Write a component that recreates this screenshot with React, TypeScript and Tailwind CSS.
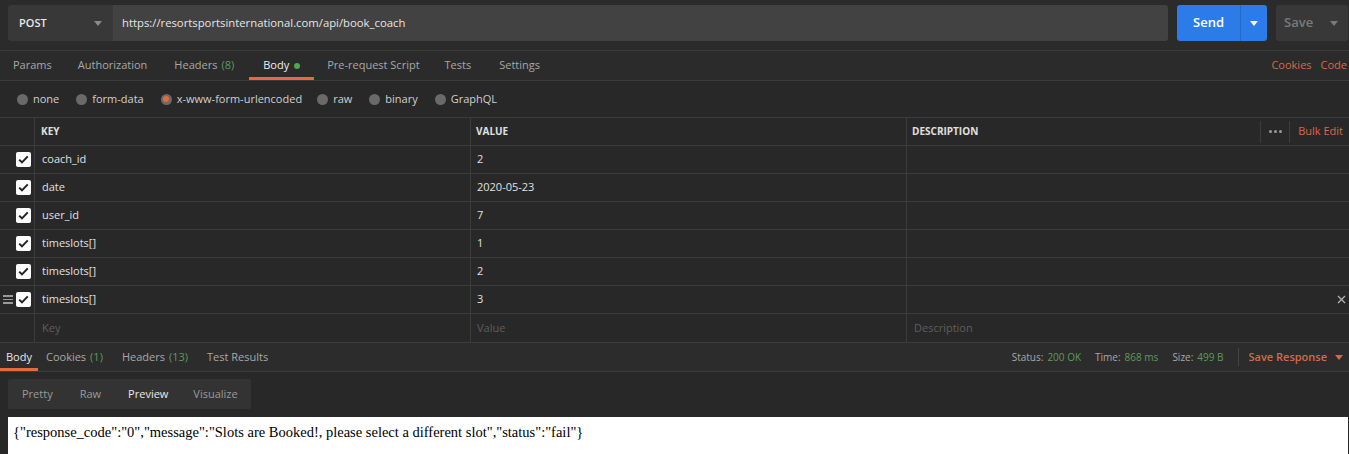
import React from 'react';

const rows = [
  { key: 'coach_id', value: '2' },
  { key: 'date', value: '2020-05-23' },
  { key: 'user_id', value: '7' },
  { key: 'timeslots[]', value: '1' },
  { key: 'timeslots[]', value: '2' },
  { key: 'timeslots[]', value: '3', hovered: true },
];

function Caret({ className }: { className?: string }) {
  return (
    <svg width="8" height="5" viewBox="0 0 8 5" className={className}>
      <path d="M0 0h8L4 5z" fill="currentColor" />
    </svg>
  );
}

function Check() {
  return (
    <div className="w-[15px] h-[15px] rounded-[2px] bg-white flex items-center justify-center">
      <svg width="11" height="9" viewBox="0 0 11 9">
        <path d="M1.2 4.6l2.8 2.8L9.8 1.4" stroke="#222" strokeWidth="2" fill="none" />
      </svg>
    </div>
  );
}

function Radio({ label, selected }: { label: string; selected?: boolean }) {
  return (
    <div className="flex items-center gap-[5px]">
      <div className="w-[11px] h-[11px] rounded-full bg-[#6a6a6a] flex items-center justify-center">
        {selected && <div className="w-[6px] h-[6px] rounded-full bg-[#e06b3f]" />}
      </div>
      <span className="text-[#d0d0d0]">{label}</span>
    </div>
  );
}

export default function App() {
  return (
    <div className="w-[1349px] h-[454px] overflow-hidden bg-[#282828] text-[11px] text-[#d4d4d4] font-['Open_Sans',sans-serif]">
      {/* request bar */}
      <div className="h-[51px] bg-[#2b2b2b] border-b border-[#3a3a3a] flex items-start pt-[5px] pl-[8px] pr-[1px] gap-[9px]">
        <div className="flex flex-1 h-[36px] rounded-[3px] overflow-hidden">
          <div className="w-[105px] bg-[#383838] flex items-center justify-between pl-[11px] pr-[11px] font-semibold text-[#e8e8e8] text-[11px]">
            POST
            <Caret className="text-[#8a8a8a]" />
          </div>
          <div className="flex-1 bg-[#424242] flex items-center pl-[9px] text-[#e6e6e6] text-[11.3px]">
            https://resortsportsinternational.com/api/book_coach
          </div>
        </div>
        <div className="w-[90px] h-[36px] rounded-[3px] bg-[#2b7be8] flex text-white">
          <div className="flex-1 flex items-center justify-center text-[13px] font-semibold">Send</div>
          <div className="w-[27px] border-l border-[#2568c8] flex items-center justify-center">
            <Caret />
          </div>
        </div>
        <div className="w-[72px] h-[36px] rounded-[3px] bg-[#383838] flex items-center justify-between pl-[8px] pr-[10px] text-[#7a7a7a] text-[13px] font-semibold">
          Save
          <Caret className="text-[#7a7a7a]" />
        </div>
      </div>

      {/* request tabs */}
      <div className="h-[30px] bg-[#2b2b2b] border-b border-[#3a3a3a] flex items-stretch pl-[13px] pr-[2px]">
        <div className="flex items-center text-[#a8a8a8]">Params</div>
        <div className="flex items-center text-[#a8a8a8] ml-[26px]">Authorization</div>
        <div className="flex items-center text-[#a8a8a8] ml-[27px]">
          Headers <span className="text-[#5e9a5c] ml-[4px]">(8)</span>
        </div>
        <div className="relative flex items-center text-[#f0f0f0] ml-[15px] px-[14px]">
          Body
          <span className="ml-[5px] w-[6px] h-[6px] rounded-full bg-[#4fa94c]" />
          <div className="absolute left-0 right-0 bottom-0 h-[3px] bg-[#e7693f]" />
        </div>
        <div className="flex items-center text-[#a8a8a8] ml-[13px]">Pre-request Script</div>
        <div className="flex items-center text-[#a8a8a8] ml-[25px]">Tests</div>
        <div className="flex items-center text-[#a8a8a8] ml-[28px]">Settings</div>
        <div className="flex-1" />
        <div className="flex items-center text-[#d56a48]">Cookies</div>
        <div className="flex items-center text-[#d56a48] ml-[9px]">Code</div>
      </div>

      {/* body types */}
      <div className="h-[36px] bg-[#282828] flex items-center pl-[17px] gap-[17px]">
        <Radio label="none" />
        <Radio label="form-data" />
        <Radio label="x-www-form-urlencoded" selected />
        <div className="flex items-center gap-[17px] -ml-[2px]">
          <Radio label="raw" />
          <Radio label="binary" />
          <Radio label="GraphQL" />
        </div>
      </div>

      {/* params table */}
      <div className="border-t border-[#3c3c3c]">
        <div className="flex h-[28px] border-b border-[#3c3c3c] text-[10px] font-bold text-[#e0e0e0]">
          <div className="w-[35px] border-r border-[#3c3c3c]" />
          <div className="w-[436px] border-r border-[#3c3c3c] flex items-center pl-[6px]">KEY</div>
          <div className="w-[436px] border-r border-[#3c3c3c] flex items-center pl-[5px]">VALUE</div>
          <div className="flex-1 flex items-center pl-[5px]">
            DESCRIPTION
            <div className="flex-1" />
            <div className="h-[22px] border-l border-[#3c3c3c] pl-[8px] pr-[7px] flex items-center gap-[2px]">
              <span className="w-[3px] h-[3px] rounded-full bg-[#9a9a9a]" />
              <span className="w-[3px] h-[3px] rounded-full bg-[#9a9a9a]" />
              <span className="w-[3px] h-[3px] rounded-full bg-[#9a9a9a]" />
            </div>
            <div className="h-[22px] border-l border-[#3c3c3c] pl-[8px] pr-[6px] flex items-center text-[11px] font-normal text-[#d56a48]">
              Bulk Edit
            </div>
          </div>
        </div>
        {rows.map((r, i) => (
          <div key={i} className="flex h-[28px] border-b border-[#3c3c3c] text-[#e0e0e0]">
            <div className="w-[35px] border-r border-[#3c3c3c] flex items-center pl-[2px]">
              <div className="w-[14px] flex flex-col gap-[2px] pl-[1px]">
                {r.hovered && (
                  <>
                    <span className="w-[10px] h-[1.5px] bg-[#9a9a9a]" />
                    <span className="w-[10px] h-[1.5px] bg-[#9a9a9a]" />
                    <span className="w-[10px] h-[1.5px] bg-[#9a9a9a]" />
                  </>
                )}
              </div>
              <Check />
            </div>
            <div className="w-[436px] border-r border-[#3c3c3c] flex items-center pl-[7px]">{r.key}</div>
            <div className="w-[436px] border-r border-[#3c3c3c] flex items-center pl-[6px]">{r.value}</div>
            <div className="flex-1 flex items-center justify-end pr-[3px]">
              {r.hovered && (
                <svg width="9" height="9" viewBox="0 0 9 9">
                  <path d="M1 1l7 7M8 1L1 8" stroke="#b0b0b0" strokeWidth="1.3" />
                </svg>
              )}
            </div>
          </div>
        ))}
        <div className="flex h-[28px] text-[#5e5e5e]">
          <div className="w-[35px] border-r border-[#3c3c3c]" />
          <div className="w-[436px] border-r border-[#3c3c3c] flex items-center pl-[7px]">Key</div>
          <div className="w-[436px] border-r border-[#3c3c3c] flex items-center pl-[6px]">Value</div>
          <div className="flex-1 flex items-center pl-[7px]">Description</div>
        </div>
      </div>

      {/* response tabs */}
      <div className="h-[30px] bg-[#2c2c2c] border-t border-[#3c3c3c] border-b border-[#3c3c3c] flex items-stretch text-[#a8a8a8]">
        <div className="relative flex items-center px-[6px] text-[#e8e8e8]">
          Body
          <div className="absolute left-0 right-0 bottom-0 h-[3px] bg-[#e7693f]" />
        </div>
        <div className="flex items-center ml-[8px]">
          Cookies <span className="text-[#5e9a5c] ml-[4px]">(1)</span>
        </div>
        <div className="flex items-center ml-[19px]">
          Headers <span className="text-[#5e9a5c] ml-[4px]">(13)</span>
        </div>
        <div className="flex items-center ml-[19px]">Test Results</div>
        <div className="flex-1" />
        <div className="flex items-center text-[10px]">
          Status: <span className="text-[#5e9a5c] ml-[4px]">200 OK</span>
        </div>
        <div className="flex items-center text-[10px] ml-[14px]">
          Time: <span className="text-[#5e9a5c] ml-[4px]">868 ms</span>
        </div>
        <div className="flex items-center text-[10px] ml-[14px]">
          Size: <span className="text-[#5e9a5c] ml-[4px]">499 B</span>
        </div>
        <div className="flex items-center ml-[14px] my-[5px] border-l border-[#444] pl-[10px] pr-[6px] gap-[8px] text-[#d56a48] font-semibold">
          Save Response
          <Caret className="text-[#d56a48]" />
        </div>
      </div>

      {/* preview */}
      <div className="pt-[7px] pl-[8px] pr-[1px]">
        <div className="inline-flex h-[30px] bg-[#333333] rounded-[2px] items-center text-[#9a9a9a]">
          <span className="px-[14px]">Pretty</span>
          <span className="px-[13px]">Raw</span>
          <span className="pl-[14px] pr-[12px] text-[#e8e8e8]">Preview</span>
          <span className="px-[13px]">Visualize</span>
        </div>
        <div className="mt-[8px] h-[40px] bg-white pl-[5px] pt-[5px] text-black text-[14.5px] font-['Liberation_Serif',serif]">
          {'{"response_code":"0","message":"Slots are Booked!, please select a different slot","status":"fail"}'}
        </div>
      </div>
    </div>
  );
}
